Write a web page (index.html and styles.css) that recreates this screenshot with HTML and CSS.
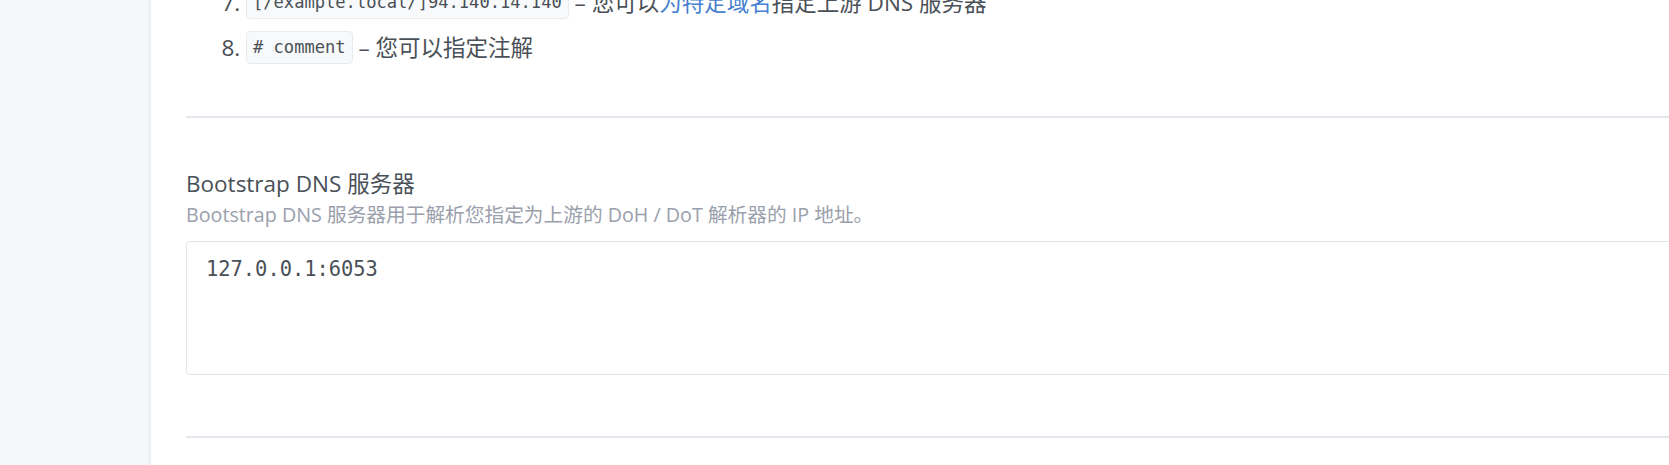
FILE: index.html
```html
<!DOCTYPE html>
<html lang="zh-CN">
<head>
<meta charset="utf-8">
<title>Bootstrap DNS</title>
<link rel="stylesheet" href="styles.css">
</head>
<body>
<div class="layout">
  <aside class="sidebar"></aside>
  <main class="content">
    <ol class="examples" start="7">
      <li><code class="code">[/example.local/]94.140.14.140</code> – 您可以<a class="link" href="#">为特定域名</a>指定上游 DNS 服务器</li>
      <li><code class="code"># comment</code> – 您可以指定注解</li>
    </ol>
    <hr class="divider">
    <section class="field">
      <label class="field-label" for="bootstrap">Bootstrap DNS 服务器</label>
      <div class="field-desc">Bootstrap DNS 服务器用于解析您指定为上游的 DoH / DoT 解析器的 IP 地址。</div>
      <textarea class="field-input" id="bootstrap">127.0.0.1:6053</textarea>
    </section>
    <hr class="divider divider-bottom">
  </main>
</div>
</body>
</html>
```

FILE: styles.css
```css
html, body {
  margin: 0;
  padding: 0;
  height: 100%;
  overflow: hidden;
  background: #ffffff;
}

body {
  font-family: "Open Sans", "Noto Sans CJK SC", sans-serif;
  font-size: 22.5px;
  color: #495057;
}

.layout {
  display: flex;
  min-height: 465px;
}

.sidebar {
  flex: 0 0 149px;
  background: #f5f7fb;
  border-right: 1px solid #e3e7ee;
  box-shadow: 1px 0 2px rgba(0, 40, 100, 0.05);
}

.content {
  flex: 0 0 1560px;
  padding: 0 36px;
  box-sizing: border-box;
}

.examples {
  display: flex;
  flex-direction: column;
  gap: 12px;
  margin: -14px 0 52px;
  padding-left: 60px;
}

.examples li {
  line-height: 33px;
  height: 33px;
  white-space: nowrap;
}

.code {
  display: inline-block;
  vertical-align: top;
  font-family: "DejaVu Sans Mono", monospace;
  font-size: 17.1px;
  line-height: 31px;
  padding: 0 6px;
  border: 1px solid #e9ecef;
  border-radius: 4px;
  background: #f8f9fa;
  color: #495057;
}

.link {
  color: #467fcf;
  text-decoration: none;
}

.divider {
  height: 0;
  margin: 0;
  border: 0;
  border-top: 2px solid #e3e8ef;
}

.field {
  display: flex;
  flex-direction: column;
  padding-top: 51px;
}

.field-label {
  font-size: 22.5px;
  line-height: 30px;
  color: #495057;
}

.field-desc {
  margin-top: 2px;
  font-size: 19.7px;
  line-height: 28px;
  color: #9aa0ac;
}

.field-input {
  margin-top: 12px;
  height: 134px;
  box-sizing: border-box;
  padding: 12px 19px;
  border: 1px solid #e0e5ec;
  border-radius: 4px;
  font-family: "DejaVu Sans Mono", monospace;
  font-size: 20.4px;
  line-height: 1.5;
  color: #495057;
  resize: none;
  outline: none;
  background: #ffffff;
}

.divider-bottom {
  margin-top: 61px;
}
```
